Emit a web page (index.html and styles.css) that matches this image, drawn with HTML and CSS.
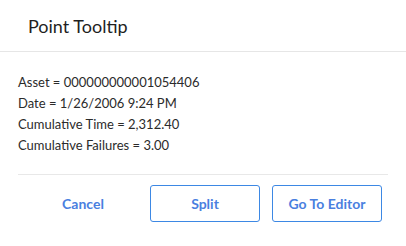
FILE: index.html
```html
<!DOCTYPE html>
<html lang="en">

<head>
    <meta charset="UTF-8">
    <meta name="viewport" content="width=device-width, initial-scale=1.0">
    <title>Point Tooltip</title>
    <link rel="stylesheet" href="styles.css">
</head>

<body>
    <div class="dialog">
        <div class="header">
            <h1>Point Tooltip</h1>
        </div>
        <div class="content">
            <p>Asset = 000000000001054406</p>
            <p>Date = 1/26/2006 9:24 PM</p>
            <p>Cumulative Time = 2,312.40</p>
            <p>Cumulative Failures = 3.00</p>
        </div>
        <div class="footer">
            <button class="link">Cancel</button>
            <button>Split</button>
            <button>Go To Editor</button>
        </div>
    </div>
</body>

</html>
```

FILE: styles.css
```css
body {
    margin: 0;
    background: #fff;
    font-family: Lato, "Liberation Sans", sans-serif;
    color: #2b2b2b;
}

.dialog {
    width: 406px;
    height: 246px;
}

.header {
    height: 51px;
    border-bottom: 1px solid #e6e6e6;
    display: flex;
    align-items: center;
    padding-left: 28px;
}

.header h1 {
    margin: 0;
    font-size: 18px;
    font-weight: normal;
    color: #1f1f1f;
}

.content {
    padding: 20px 18px 0;
}

.content p {
    margin: 0;
    font-size: 13px;
    line-height: 21px;
}

.footer {
    margin: 18px 18px 0;
    border-top: 1px solid #e8e8e8;
    padding: 10px 6px 0 0;
    display: flex;
    justify-content: flex-end;
    gap: 12px;
}

.footer button {
    width: 110px;
    height: 37px;
    background: #fff;
    border: 1px solid #3d88e4;
    border-radius: 3px;
    color: #4a7fdf;
    font-family: Lato, "Liberation Sans", sans-serif;
    font-size: 14px;
    font-weight: bold;
    cursor: pointer;
}

.footer .link {
    border-color: transparent;
}
```
